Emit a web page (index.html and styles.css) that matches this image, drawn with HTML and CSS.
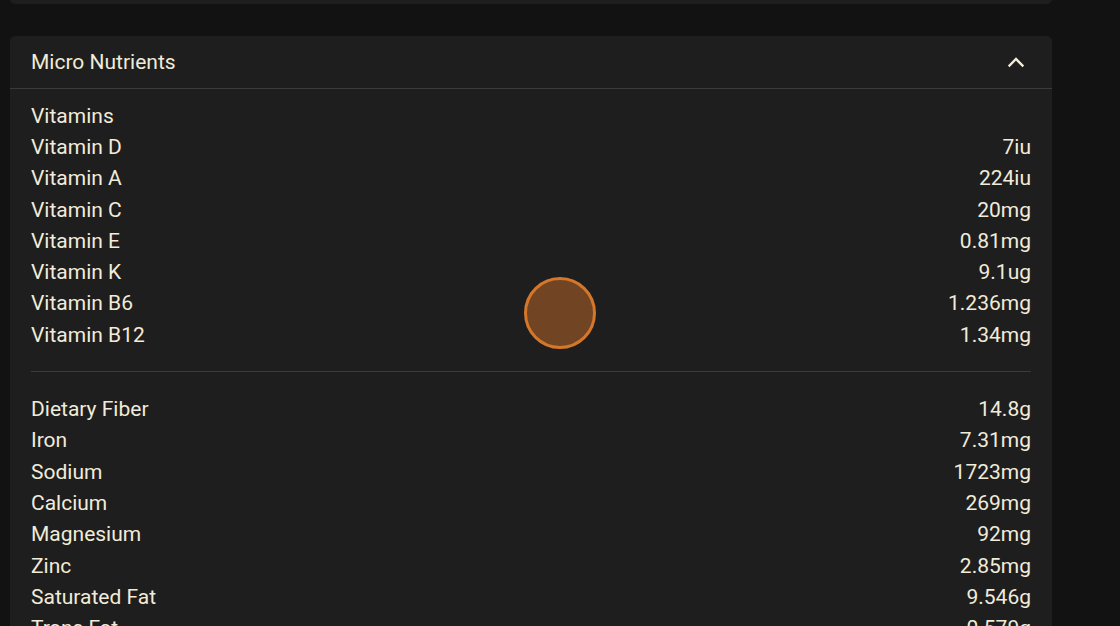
FILE: index.html
```html
<html>
    <head>
        <meta charset="UTF-8">
        <title>Nutrition</title>
        <link rel="stylesheet" href="styles.css">
    </head>
    <body>
        <div class="page">
            <div class="card card-prev"></div>

            <div class="card">
                <div class="card-header">
                    <span class="card-title">Micro Nutrients</span>
                    <svg class="chevron" width="24" height="24" viewBox="0 0 24 24">
                        <path d="M5.5 15.5 L12 9 L18.5 15.5" fill="none" stroke="#f3edd9" stroke-width="2.3" stroke-linecap="square"/>
                    </svg>
                </div>
                <div class="card-body">
                    <div class="group">
                        <div class="row"><span>Vitamins</span></div>
                        <div class="row"><span>Vitamin D</span><span>7iu</span></div>
                        <div class="row"><span>Vitamin A</span><span>224iu</span></div>
                        <div class="row"><span>Vitamin C</span><span>20mg</span></div>
                        <div class="row"><span>Vitamin E</span><span>0.81mg</span></div>
                        <div class="row"><span>Vitamin K</span><span>9.1ug</span></div>
                        <div class="row"><span>Vitamin B6</span><span>1.236mg</span></div>
                        <div class="row"><span>Vitamin B12</span><span>1.34mg</span></div>
                    </div>
                    <hr class="divider">
                    <div class="group">
                        <div class="row"><span>Dietary Fiber</span><span>14.8g</span></div>
                        <div class="row"><span>Iron</span><span>7.31mg</span></div>
                        <div class="row"><span>Sodium</span><span>1723mg</span></div>
                        <div class="row"><span>Calcium</span><span>269mg</span></div>
                        <div class="row"><span>Magnesium</span><span>92mg</span></div>
                        <div class="row"><span>Zinc</span><span>2.85mg</span></div>
                        <div class="row"><span>Saturated Fat</span><span>9.546g</span></div>
                        <div class="row"><span>Trans Fat</span><span>0.579g</span></div>
                    </div>
                </div>
            </div>
        </div>

        <div class="touch"></div>
    </body>
</html>
```

FILE: styles.css
```css
html, body
{
    margin: 0;
    padding: 0;
    height: 100%;
    overflow: hidden;
    background-color: #121212;
    font-family: Roboto, "Noto Sans", sans-serif;
    color: #f1ebd9;
}

.page
{
    width: 1042px;
    margin-left: 10px;
    margin-top: -40px;
    display: flex;
    flex-direction: column;
    gap: 32px;
}

.card
{
    background-color: #1e1e1e;
    border-radius: 5px;
}

.card-prev
{
    height: 44px;
}

.card-header
{
    height: 52px;
    padding: 0 21px;
    display: flex;
    align-items: center;
    justify-content: space-between;
    border-bottom: 1px solid #3b3b3b;
}

.card-title
{
    font-size: 21px;
}

.chevron
{
    margin-right: 3px;
}

.card-body
{
    padding: 11px 21px 0 21px;
}

.row
{
    height: 31.3px;
    display: flex;
    align-items: center;
    justify-content: space-between;
    font-size: 21px;
}

.divider
{
    border: none;
    border-top: 1px solid #3b3b3b;
    margin: 21px 0 21px 0;
}

.touch
{
    position: absolute;
    left: 524px;
    top: 277px;
    width: 66px;
    height: 66px;
    border-radius: 50%;
    border: 3px solid #d4772a;
    background-color: #714524;
}
```
